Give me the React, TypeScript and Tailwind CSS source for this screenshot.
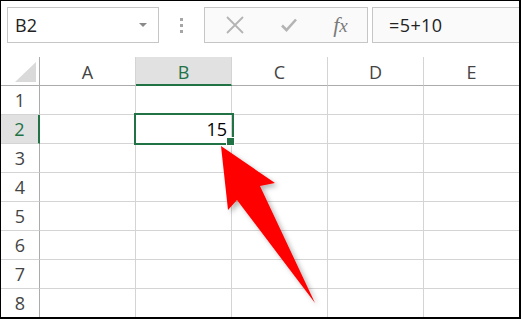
const cols = ["A", "B", "C", "D", "E"];
const rows = [1, 2, 3, 4, 5, 6, 7, 8];

const font = { fontFamily: '"Segoe UI", "Open Sans", "Noto Sans", sans-serif' };

export default function App() {
  return (
    <div className="relative w-[521px] h-[319px] overflow-hidden bg-white" style={font}>
      <div className="w-full h-full border-black border-t border-l border-r-2 border-b-2 overflow-hidden">
        {/* Formula bar */}
        <div className="h-[56px] flex items-start pt-[6px] pl-[6px]">
          <div className="w-[152px] h-[36px] border border-[#c6c6c6] flex items-center justify-between pl-[7px] pr-[11px]">
            <span className="text-[18px] text-[#222]">B2</span>
            <span className="w-0 h-0 border-l-[4px] border-r-[4px] border-t-[4px] border-l-transparent border-r-transparent border-t-[#8a8a8a]" />
          </div>
          <div className="w-[45px] h-[36px] flex flex-col items-center justify-center gap-[3px]">
            <span className="w-[3px] h-[3px] bg-[#a6a6a6]" />
            <span className="w-[3px] h-[3px] bg-[#a6a6a6]" />
            <span className="w-[3px] h-[3px] bg-[#a6a6a6]" />
          </div>
          <div className="w-[164px] h-[36px] border border-[#c6c6c6] bg-[#fafafa] flex items-center">
            <div className="w-[57px] flex justify-center pl-[3px]">
              <svg width="18" height="18" viewBox="0 0 18 18">
                <path d="M1 1 L17 17 M17 1 L1 17" stroke="#b4b4b4" strokeWidth="1.8" fill="none" />
              </svg>
            </div>
            <div className="w-[54px] flex justify-center">
              <svg width="16" height="14" viewBox="0 0 16 14">
                <path d="M1 7.5 L5.5 12 L15 1.5" stroke="#b4b4b4" strokeWidth="2.6" fill="none" />
              </svg>
            </div>
            <div className="flex-1 flex justify-center pr-[2px]">
              <span className="text-[22px] leading-none italic text-[#7a7a7a]" style={{ fontFamily: '"Liberation Serif", serif' }}>
                f<span className="text-[19px]">x</span>
              </span>
            </div>
          </div>
          <div className="ml-[4px] flex-1 h-[36px] border border-r-0 border-[#c6c6c6] bg-[#fafafa] flex items-center pl-[16px]">
            <span className="text-[18px] text-[#222] tracking-[0.4px]">=5+10</span>
          </div>
        </div>

        {/* Grid */}
        <div className="flex flex-col">
          <div className="flex">
            <div className="w-[39px] h-[29px] border-r border-b border-[#ababab] relative shrink-0">
              <div className="absolute left-[14px] top-[5px] w-0 h-0 border-l-[21px] border-b-[20px] border-l-transparent border-b-[#dadada]" />
            </div>
            {cols.map((c) => (
              <div
                key={c}
                className={
                  c === "B"
                    ? "w-[96px] h-[29px] shrink-0 border-r border-r-[#d4d4d4] border-b-2 border-b-[#217346] bg-[#e1e1e1] text-[#217346] flex items-center justify-center text-[18px] pt-[3px]"
                    : "w-[96px] h-[29px] shrink-0 border-r border-r-[#d4d4d4] border-b border-b-[#ababab] text-[#444] flex items-center justify-center text-[18px] pt-[3px]"
                }
              >
                {c}
              </div>
            ))}
          </div>
          {rows.map((r) => (
            <div key={r} className="flex">
              <div
                className={
                  r === 2
                    ? "w-[39px] h-[29px] shrink-0 border-r-2 border-r-[#217346] border-b border-b-[#d4d4d4] bg-[#e1e1e1] text-[#217346] flex items-center justify-center text-[18px]"
                    : "w-[39px] h-[29px] shrink-0 border-r border-r-[#ababab] border-b border-b-[#d4d4d4] text-[#444] flex items-center justify-center text-[18px]"
                }
              >
                {r}
              </div>
              {cols.map((c) => (
                <div key={c} className="relative w-[96px] h-[29px] shrink-0 border-r border-b border-[#d4d4d4]">
                  {r === 2 && c === "B" && (
                    <>
                      <div className="absolute -left-[2px] -top-[2px] w-[100px] h-[32px] border-2 border-[#217346] z-10" />
                      <div className="absolute right-[4px] top-0 h-full flex items-center text-[18px] text-black">15</div>
                      <div className="absolute left-[90px] top-[22px] w-[9px] h-[9px] bg-white p-[1px] z-20">
                        <div className="w-full h-full bg-[#217346]" />
                      </div>
                    </>
                  )}
                </div>
              ))}
            </div>
          ))}
        </div>
      </div>

      {/* Annotation arrow */}
      <svg className="absolute left-0 top-0 pointer-events-none z-30" width="521" height="319" viewBox="0 0 521 319">
        <defs>
          <filter id="sh" x="-20%" y="-20%" width="140%" height="140%">
            <feDropShadow dx="3" dy="3" stdDeviation="2.5" floodColor="#000" floodOpacity="0.28" />
          </filter>
        </defs>
        <polygon points="221,146 275,183 260,186 315,303 237,200 228,210" fill="#ff0000" filter="url(#sh)" />
      </svg>
    </div>
  );
}
